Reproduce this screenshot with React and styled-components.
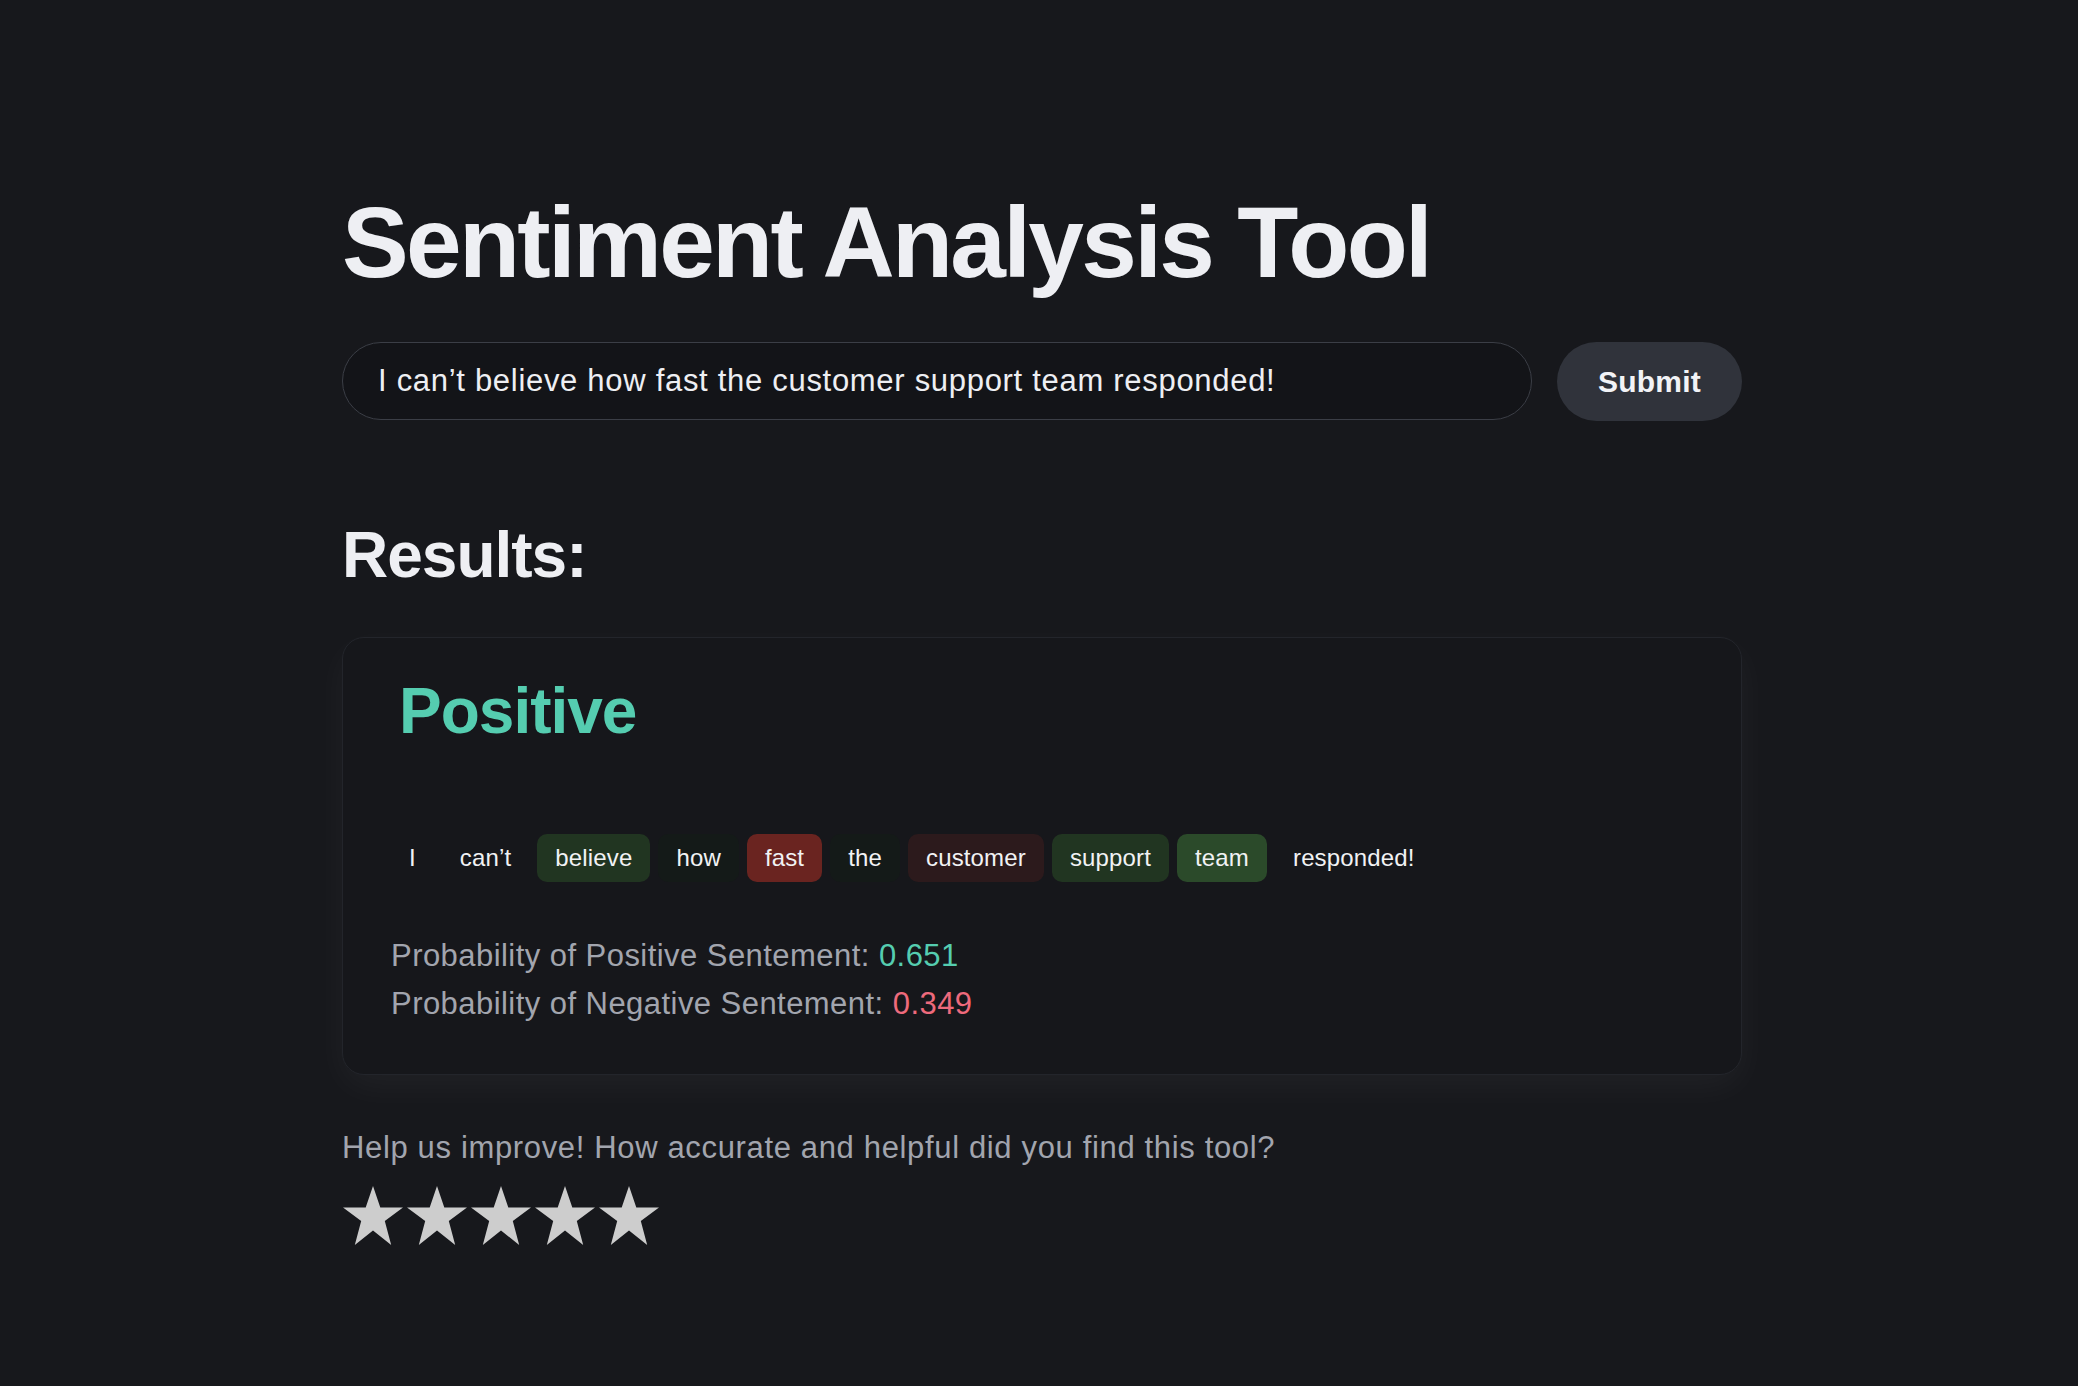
import React from "react";
import styled, { createGlobalStyle } from "styled-components";

const GlobalStyle = createGlobalStyle`
  body {
    margin: 0;
    background: #17181c;
    font-family: "Liberation Sans", Arial, sans-serif;
    color: #eeeff3;
  }
`;

const tokens = [
  { word: "I", tone: "none" },
  { word: "can’t", tone: "none" },
  { word: "believe", tone: "pos" },
  { word: "how", tone: "faint" },
  { word: "fast", tone: "neg" },
  { word: "the", tone: "faint" },
  { word: "customer", tone: "weakNeg" },
  { word: "support", tone: "pos" },
  { word: "team", tone: "strongPos" },
  { word: "responded!", tone: "none" },
];

const toneColors = {
  none: "transparent",
  faint: "#141a18",
  pos: "#213521",
  strongPos: "#2b4a2a",
  neg: "#6a2420",
  weakNeg: "#2c1a1c",
};

const App = () => {
  return (
    <>
      <GlobalStyle />
      <Page>
        <Title>Sentiment Analysis Tool</Title>
        <InputRow>
          <TextInput defaultValue="I can’t believe how fast the customer support team responded!" />
          <SubmitButton>Submit</SubmitButton>
        </InputRow>

        <SectionHeading>Results:</SectionHeading>
        <ResultCard>
          <Verdict>Positive</Verdict>
          <TokenList>
            {tokens.map((t, i) => (
              <Token key={i} $tone={t.tone}>{t.word}</Token>
            ))}
          </TokenList>
          <Probabilities>
            <div>Probability of Positive Sentement: <Value $color="#55cdb0">0.651</Value></div>
            <div>Probability of Negative Sentement: <Value $color="#ee6a7c">0.349</Value></div>
          </Probabilities>
        </ResultCard>

        <Feedback>Help us improve! How accurate and helpful did you find this tool?</Feedback>
        <Stars>
          {[0, 1, 2, 3, 4].map((i) => (
            <svg key={i} width="62" height="60" viewBox="0 0 62 60">
              <polygon
                points="31,0 38.3,21.4 61,21.6 42.8,35 49.2,59 31,44.5 12.8,59 19.2,35 1,21.6 23.7,21.4"
                fill="#cdcdcd"
              />
            </svg>
          ))}
        </Stars>
      </Page>
    </>
  );
};

export default App;

const Page = styled.div`
  width: 1400px;
  margin-left: calc(50% - 697px);
  padding: 182px 0 100px;
  box-sizing: border-box;
`;

const Title = styled.h1`
  margin: 0;
  font-size: 100px;
  line-height: 120px;
  font-weight: 700;
  letter-spacing: -2.7px;
  color: #eeeff3;
`;

const InputRow = styled.div`
  display: flex;
  gap: 25px;
  margin-top: 40px;
`;

const TextInput = styled.input`
  flex: 1;
  height: 78px;
  box-sizing: border-box;
  padding: 0 35px;
  border: 1.5px solid #3b3e46;
  border-radius: 39px;
  background: #131418;
  color: #eeeff3;
  font-family: "Liberation Sans", Arial, sans-serif;
  font-size: 31px;
  letter-spacing: 0.7px;
  outline: none;
`;

const SubmitButton = styled.button`
  width: 185px;
  height: 79px;
  border: none;
  border-radius: 40px;
  background: #30333b;
  color: #f2f3f6;
  font-family: "Liberation Sans", Arial, sans-serif;
  font-size: 30px;
  font-weight: 700;
  letter-spacing: 0.2px;
  cursor: pointer;
`;

const SectionHeading = styled.h2`
  margin: 96px 0 0;
  font-size: 64px;
  line-height: 77px;
  font-weight: 700;
  letter-spacing: -1px;
  color: #eeeff3;
`;

const ResultCard = styled.div`
  margin-top: 43px;
  padding: 35px 48px 46px;
  border: 1px solid #23252b;
  border-radius: 22px;
  background: #16171b;
  box-shadow: 0 12px 36px rgba(255, 255, 255, 0.045);
`;

const Verdict = styled.div`
  padding-left: 8px;
  font-size: 64px;
  line-height: 77px;
  font-weight: 700;
  letter-spacing: -1px;
  color: #55cdb0;
`;

const TokenList = styled.div`
  display: flex;
  flex-wrap: wrap;
  gap: 8px;
  margin-top: 84px;
`;

const Token = styled.span`
  padding: 12px 18px;
  border-radius: 10px;
  font-size: 24px;
  line-height: 24px;
  letter-spacing: 0.15px;
  color: #f1f2f4;
  background: ${(p) => toneColors[p.$tone]};
`;

const Probabilities = styled.div`
  margin-top: 50px;
  font-size: 31px;
  line-height: 48px;
  letter-spacing: 0.45px;
  color: #a2a5ae;
`;

const Value = styled.span`
  color: ${(p) => p.$color};
`;

const Feedback = styled.p`
  margin: 49px 0 0;
  font-size: 31px;
  line-height: 48px;
  letter-spacing: 0.65px;
  color: #a2a5ae;
`;

const Stars = styled.div`
  display: flex;
  gap: 2px;
  margin-top: 14px;
`;
